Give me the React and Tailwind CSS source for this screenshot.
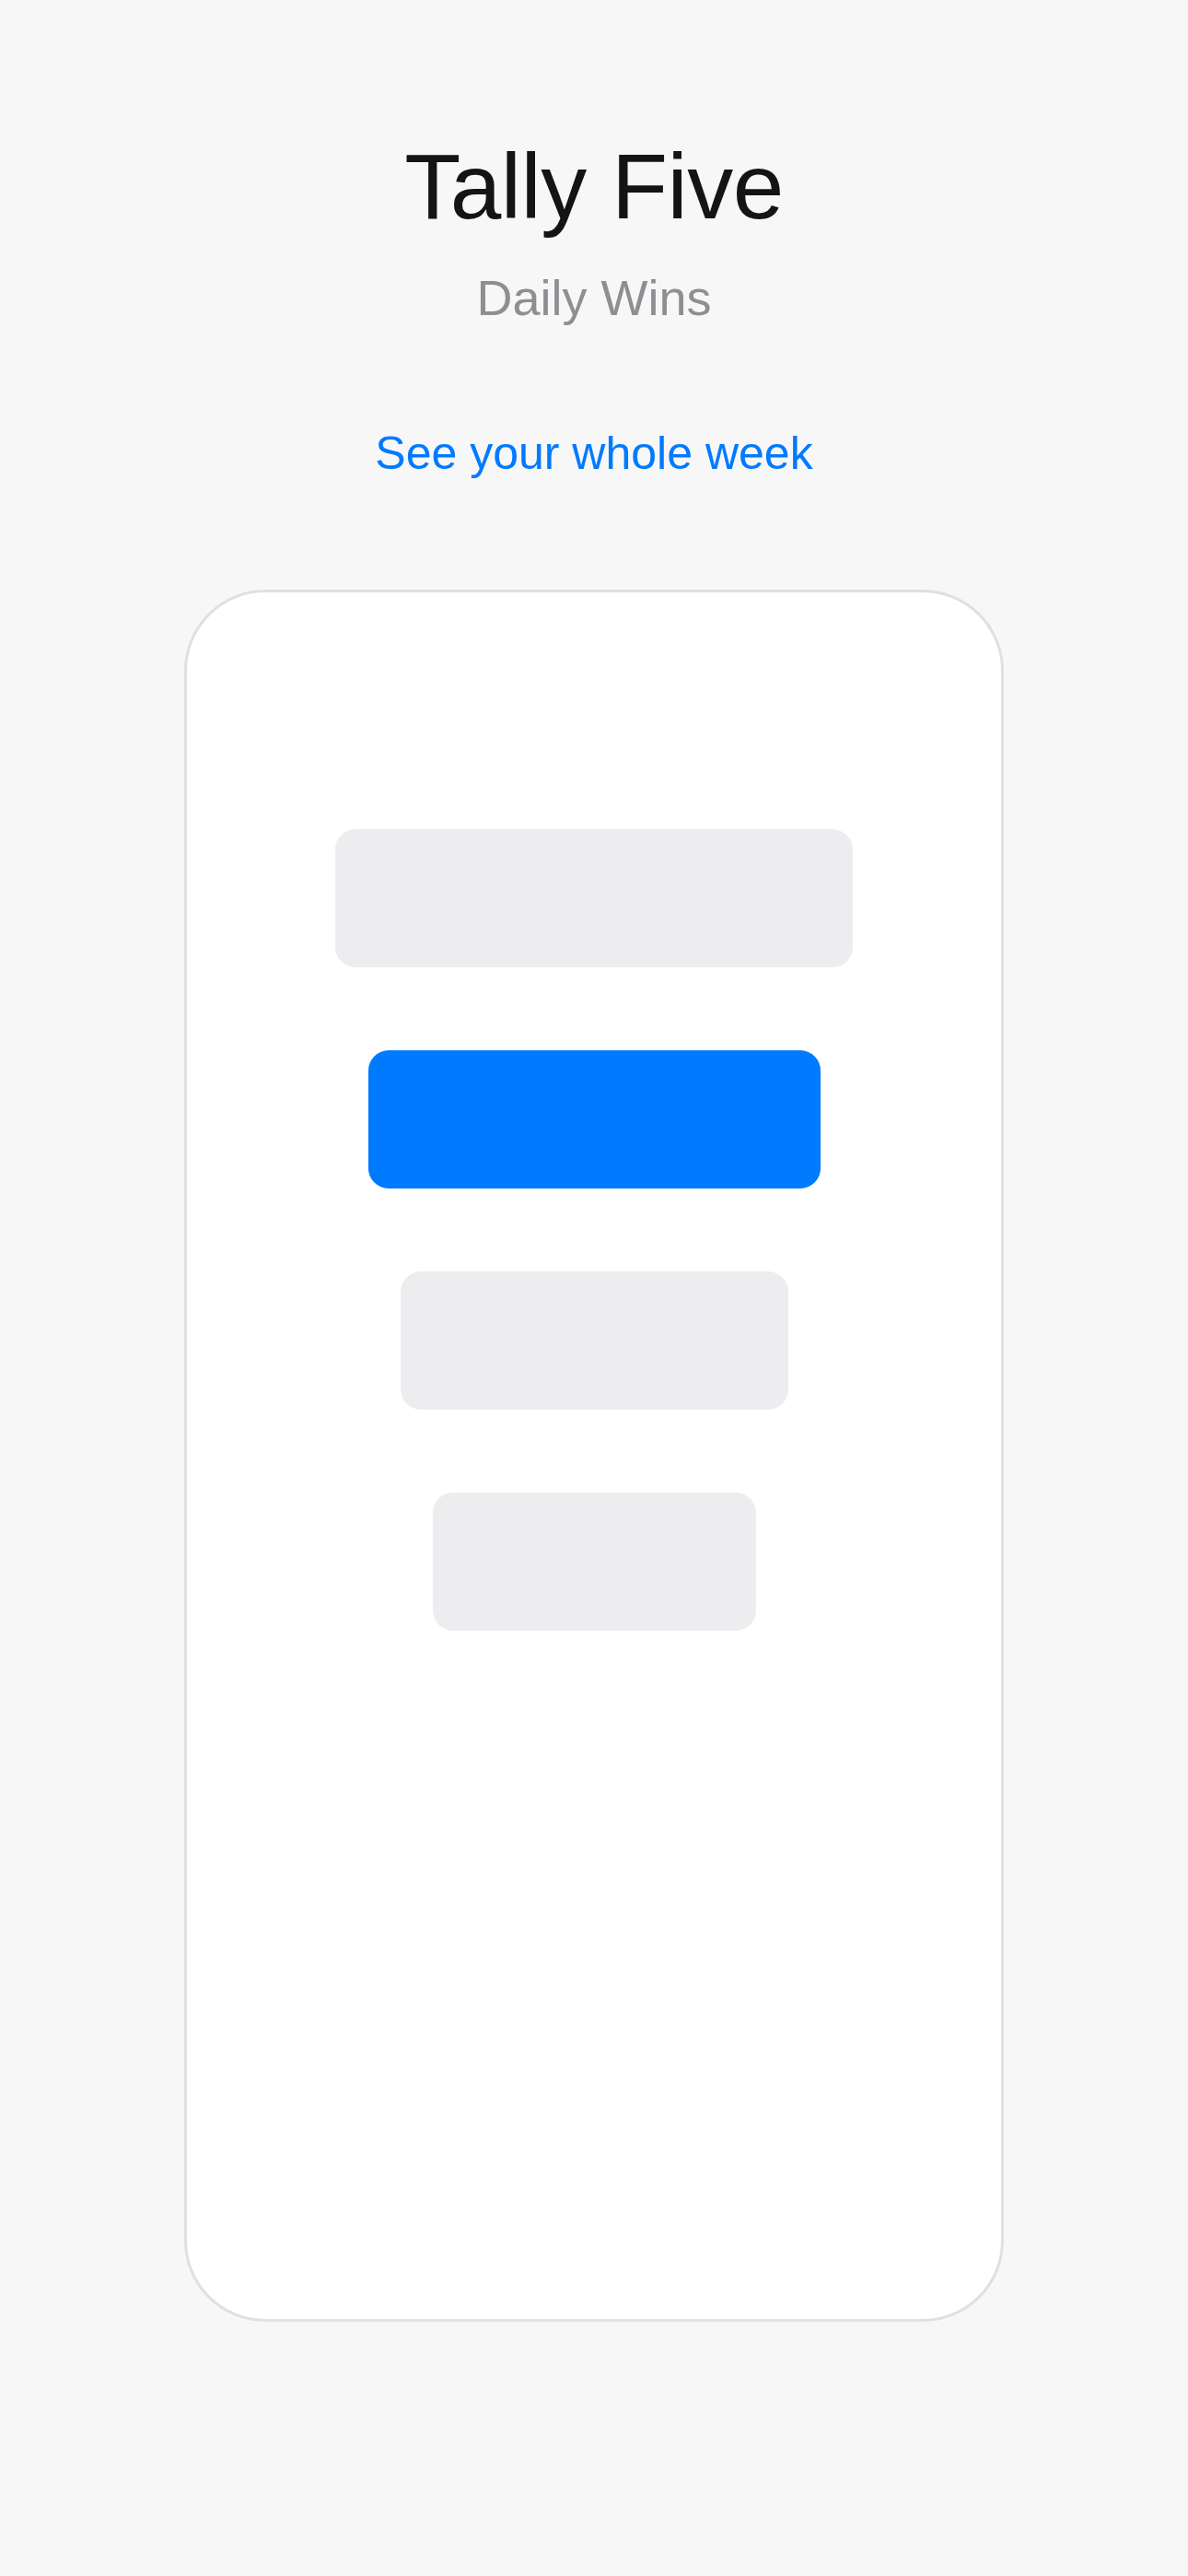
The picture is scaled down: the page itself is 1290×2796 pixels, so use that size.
import React from 'react';

const bars = [
  { width: 'w-[562px]', active: false },
  { width: 'w-[491px]', active: true },
  { width: 'w-[421px]', active: false },
  { width: 'w-[351px]', active: false },
];

export default function App() {
  return (
    <main
      className="min-h-[2796px] w-full bg-[#f7f7f7] flex flex-col items-center"
      style={{ fontFamily: '"Liberation Sans", Arial, Helvetica, sans-serif' }}
    >
      {/* Header */}
      <h1 className="mt-[152px] text-[100px] leading-none tracking-[-0.5px] text-[#141414] font-normal">
        Tally Five
      </h1>
      <p className="mt-[44px] text-[54px] leading-none text-[#8e8e93]">Daily Wins</p>

      <a className="mt-[117px] text-[50px] leading-none text-[#007aff] cursor-pointer">
        See your whole week
      </a>

      {/* Week card */}
      <section className="mt-[123px] w-[890px] h-[1880px] bg-white border-[3px] border-[#e0e0e0] rounded-[88px] flex flex-col items-center pt-[257px] gap-[90px]">
        {bars.map((bar, i) => (
          <div
            key={i}
            className={`${bar.width} h-[150px] rounded-[22px] ${bar.active ? 'bg-[#007aff]' : 'bg-[#ededef]'}`}
          />
        ))}
      </section>
    </main>
  );
}
